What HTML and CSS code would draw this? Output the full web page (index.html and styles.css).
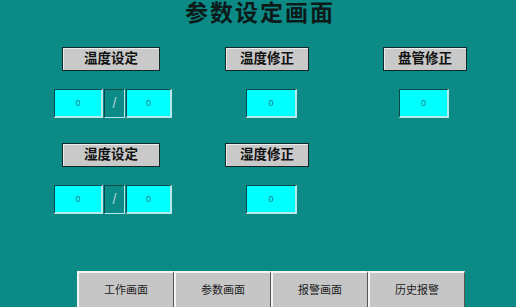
FILE: index.html
```html
<!DOCTYPE html>
<html lang="zh-CN">
<head>
    <meta charset="UTF-8">
    <title>参数设定画面</title>
    <link rel="stylesheet" href="styles.css">
</head>
<body>
    <div class="screen">
        <h1 class="title">参数设定画面</h1>

        <div class="grid">
            <div class="cell col1">
                <div class="label wide">温度设定</div>
                <div class="pair">
                    <div class="field">0</div>
                    <div class="slash">/</div>
                    <div class="field">0</div>
                </div>
            </div>
            <div class="cell">
                <div class="label">温度修正</div>
                <div class="field single s2">0</div>
            </div>
            <div class="cell col3">
                <div class="label">盘管修正</div>
                <div class="field single s3">0</div>
            </div>

            <div class="cell col1">
                <div class="label wide">湿度设定</div>
                <div class="pair">
                    <div class="field">0</div>
                    <div class="slash">/</div>
                    <div class="field">0</div>
                </div>
            </div>
            <div class="cell">
                <div class="label">湿度修正</div>
                <div class="field single s2">0</div>
            </div>
        </div>

        <div class="nav">
            <button class="nav-btn">工作画面</button>
            <button class="nav-btn">参数画面</button>
            <button class="nav-btn">报警画面</button>
            <button class="nav-btn">历史报警</button>
        </div>
    </div>
</body>
</html>
```

FILE: styles.css
```css
body {
    margin: 0;
    background: #0b8a86;
    font-family: "Liberation Serif", "Noto Sans CJK SC", serif;
}
.screen {
    width: 516px;
    height: 307px;
    overflow: hidden;
    position: relative;
}
.title {
    margin: 0;
    padding: 1px 0 0 185px;
    height: 45px;
    box-sizing: border-box;
    font-size: 23px;
    line-height: 26px;
    letter-spacing: 2px;
    font-weight: bold;
    color: #0c1a1a;
}
.grid {
    display: grid;
    grid-template-columns: 118px 84px 85px;
    column-gap: 53px;
    row-gap: 23px;
    padding-left: 54px;
}
.cell {
    display: flex;
    flex-direction: column;
    align-items: flex-start;
}
.col3 {
    margin-left: 21px;
}
.label {
    width: 84px;
    height: 24px;
    box-sizing: border-box;
    background: #c9c9c9;
    border: 1px solid #142626;
    box-shadow: inset 1px 1px 0 #ececec;
    font-size: 13.5px;
    font-weight: bold;
    color: #111;
    text-align: center;
    line-height: 22px;
    margin-top: 2px;
}
.label.wide {
    width: 98px;
    margin-left: 8px;
}
.pair {
    display: flex;
    margin-top: 18px;
}
.field {
    width: 49px;
    height: 29px;
    box-sizing: border-box;
    background: #00ffff;
    border-top: 1px solid #0a4a4a;
    border-left: 1px solid #0a4a4a;
    border-right: 2px solid #b8e8e8;
    border-bottom: 2px solid #b8e8e8;
    font-family: "Liberation Sans", sans-serif;
    font-size: 9px;
    color: #2a7c8c;
    text-align: center;
    line-height: 27px;
}
.pair .field:last-child {
    width: 46px;
}
.slash {
    width: 21px;
    height: 29px;
    margin: 0 1px;
    box-sizing: border-box;
    border-top: 1px solid #0a4a4a;
    border-left: 1px solid #0a4a4a;
    border-right: 1px solid #b8e8e8;
    border-bottom: 1px solid #b8e8e8;
    color: #b0d8d8;
    font-family: "Liberation Sans", sans-serif;
    font-size: 14px;
    text-align: center;
    line-height: 27px;
}
.single {
    margin-top: 18px;
    width: 51px;
}
.s2 {
    margin-left: 21px;
}
.s3 {
    margin-left: 16px;
    width: 50px;
}
.nav {
    position: absolute;
    left: 77px;
    top: 271px;
    display: flex;
}
.nav-btn {
    width: 97px;
    height: 38px;
    background: #c6c6c6;
    border: none;
    border-top: 2px solid #f4f4f4;
    border-left: 2px solid #f4f4f4;
    border-right: 1px solid #555;
    border-bottom: 1px solid #555;
    font-family: "Noto Sans CJK SC", sans-serif;
    font-size: 11px;
    color: #222;
    padding: 0 0 4px 0;
}
```
